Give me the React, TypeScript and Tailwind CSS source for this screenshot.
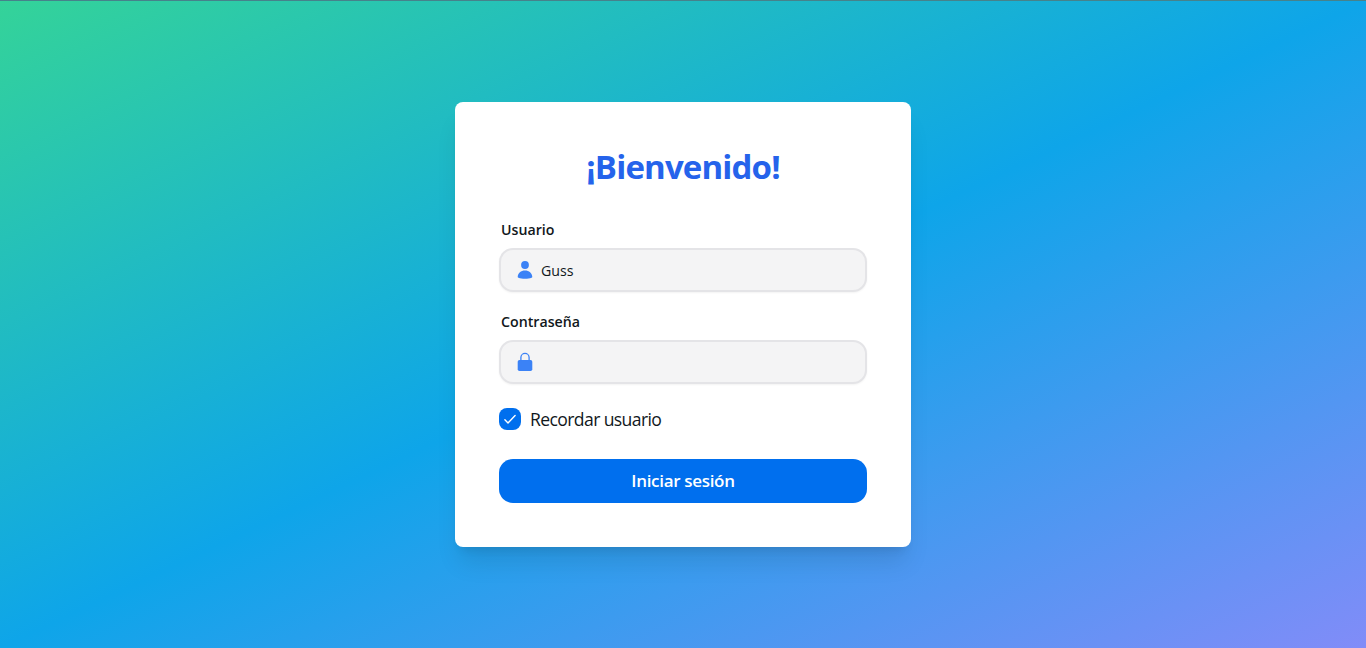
import { useState } from "react";
import type { ReactNode } from "react";

function UserIcon() {
  return (
    <svg className="h-5 w-4 shrink-0" viewBox="0 0 16 20" fill="#3b82f6" aria-hidden="true">
      <circle cx="8" cy="5" r="3.9" />
      <path d="M.7 16.700C.9 13.100 3.900 10.500 8 10.500s7.100 2.600 7.300 6.200c0 .5-.3.900-.8 1.100-1.700.7-4 1-6.500 1s-4.800-.3-6.500-1c-.5-.2-.8-.6-.8-1.100Z" />
    </svg>
  );
}

function LockIcon() {
  return (
    <svg className="h-5 w-4 shrink-0" viewBox="0 0 16 20" fill="#3b82f6" aria-hidden="true">
      <rect x="0.7" y="8" width="14.600" height="11" rx="1.800" />
      <path d="M3.900 9V5.500a4.100 4.100 0 0 1 8.200 0V9" fill="none" stroke="#3b82f6" strokeWidth="1.300" />
    </svg>
  );
}

interface FieldProps {
  label: string;
  type: string;
  icon: ReactNode;
  initial?: string;
}

function Field({ label, type, icon, initial = "" }: FieldProps) {
  const [value, setValue] = useState(initial);
  return (
    <label className="flex flex-col">
      <span className="flex h-[34px] items-center pb-0.5 pl-0.5 text-[14.200px] leading-6 font-semibold">{label}</span>
      <span className="flex h-11 items-center gap-2 rounded-[14px] border-2 border-[#e4e4e7] bg-[#f4f4f5] px-4 shadow-xs">
        {icon}
        <input
          className="min-w-0 flex-1 bg-transparent pt-0.5 text-[14.200px] leading-6 outline-none"
          type={type}
          value={value}
          onChange={(event) => setValue(event.target.value)}
        />
      </span>
    </label>
  );
}

export default function App() {
  const [remember, setRemember] = useState(true);
  return (
    <main className="flex h-screen items-start justify-center overflow-hidden border-t border-[#46828b] bg-[linear-gradient(to_bottom_right,#34d399,#0ea5e9_50%,#818cf8)] pt-[101px] font-['Open_Sans','Noto_Sans',sans-serif] text-[#11181c]">
      <form
        className="flex h-[445px] w-[456px] flex-col rounded-lg bg-white px-11 pt-11 shadow-xl"
        onSubmit={(event) => event.preventDefault()}
      >
        <h1 className="mb-[26px] text-center text-[33px] leading-[42px] font-bold tracking-[-0.85px] text-[#2563eb]">
          ¡Bienvenido!
        </h1>
        <div className="flex flex-col gap-[14px]">
          <Field label="Usuario" type="text" icon={<UserIcon />} initial="Guss" />
          <Field label="Contraseña" type="password" icon={<LockIcon />} />
        </div>
        <label className="mt-6 flex h-[22px] items-center gap-[9px]">
          <input
            className="sr-only"
            type="checkbox"
            checked={remember}
            onChange={(event) => setRemember(event.target.checked)}
          />
          <span className="flex size-[22px] items-center justify-center rounded-[8px] bg-[#006fee]">
            {remember && (
              <svg className="h-[11px] w-3" viewBox="0 0 12 11" fill="none" stroke="white" strokeWidth="1.400" strokeLinecap="round" strokeLinejoin="round" aria-hidden="true">
                <path d="M.9 5.800 4 9 11.100 1.400" />
              </svg>
            )}
          </span>
          <span className="text-[17.600px] leading-7 tracking-[-0.62px]">Recordar usuario</span>
        </label>
        <button className="mt-[29px] h-11 rounded-[14px] bg-[#006fee] text-[17px] leading-7 font-semibold tracking-[-0.32px] text-white" type="submit">
          Iniciar sesión
        </button>
      </form>
    </main>
  );
}
